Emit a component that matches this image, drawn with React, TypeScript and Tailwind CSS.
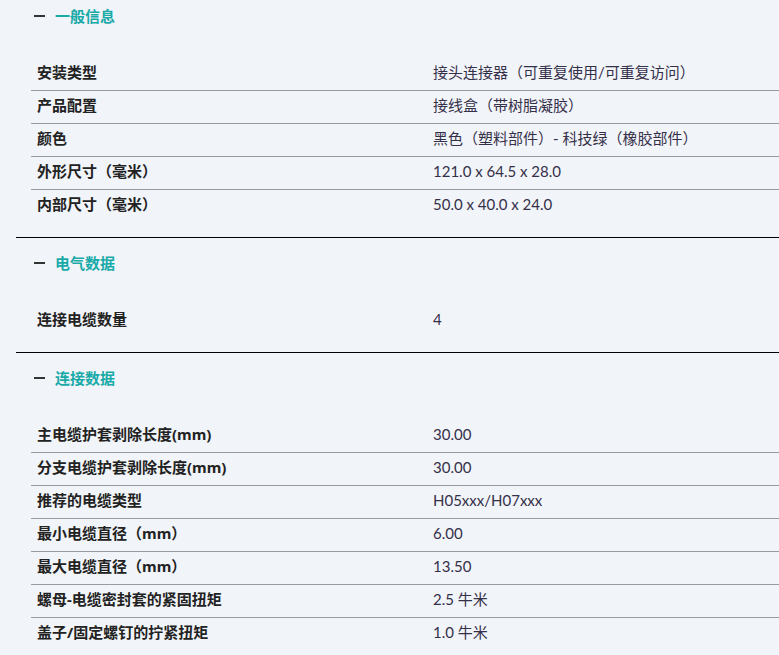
import React from 'react'

interface Section {
  title: string
  rows: [string, string][]
}

const sections: Section[] = [
  {
    title: '一般信息',
    rows: [
      ['安装类型', '接头连接器（可重复使用/可重复访问）'],
      ['产品配置', '接线盒（带树脂凝胶）'],
      ['颜色', '黑色（塑料部件）- 科技绿（橡胶部件）'],
      ['外形尺寸（毫米）', '121.0 x 64.5 x 28.0'],
      ['内部尺寸（毫米）', '50.0 x 40.0 x 24.0'],
    ],
  },
  {
    title: '电气数据',
    rows: [['连接电缆数量', '4']],
  },
  {
    title: '连接数据',
    rows: [
      ['主电缆护套剥除长度(mm)', '30.00'],
      ['分支电缆护套剥除长度(mm)', '30.00'],
      ['推荐的电缆类型', 'H05xxx/H07xxx'],
      ['最小电缆直径（mm）', '6.00'],
      ['最大电缆直径（mm）', '13.50'],
      ['螺母-电缆密封套的紧固扭矩', '2.5 牛米'],
      ['盖子/固定螺钉的拧紧扭矩', '1.0 牛米'],
    ],
  },
]

function SpecSection({ section, first }: { section: Section; first: boolean }) {
  return (
    <div className={`ml-[16px] pb-[14px] ${first ? '' : 'border-t border-black'}`}>
      <div className="h-[50px] flex items-center pl-[18px]">
        <span className="block w-[11px] h-[2px] bg-[#333333]" />
        <span className="ml-[10px] text-[15px] font-bold text-[#19aaa9]">{section.title}</span>
      </div>
      <div className="mt-[17px] ml-[15px]">
        {section.rows.map((row, i) => (
          <div
            key={i}
            className={`h-[33px] flex items-center pl-[6px] pb-[3px] border-b ${
              i === section.rows.length - 1 ? 'border-transparent' : 'border-[#9b9b9b]'
            }`}
          >
            <div className="w-[396px] shrink-0 text-[15px] font-bold text-[#222222]">{row[0]}</div>
            <div
              className="text-[15px] text-[#35304a]"
              style={{ fontFamily: 'Lato, "Noto Sans CJK SC", sans-serif' }}
            >
              {row[1]}
            </div>
          </div>
        ))}
      </div>
    </div>
  )
}

export default function App() {
  return (
    <div
      className="w-[779px] h-[655px] overflow-hidden bg-[#f1f4f8]"
      style={{ fontFamily: '"Noto Sans", "Noto Sans CJK SC", sans-serif' }}
    >
      <div className="-mt-[9px]">
        {sections.map((s, i) => (
          <SpecSection key={i} section={s} first={i === 0} />
        ))}
      </div>
    </div>
  )
}
